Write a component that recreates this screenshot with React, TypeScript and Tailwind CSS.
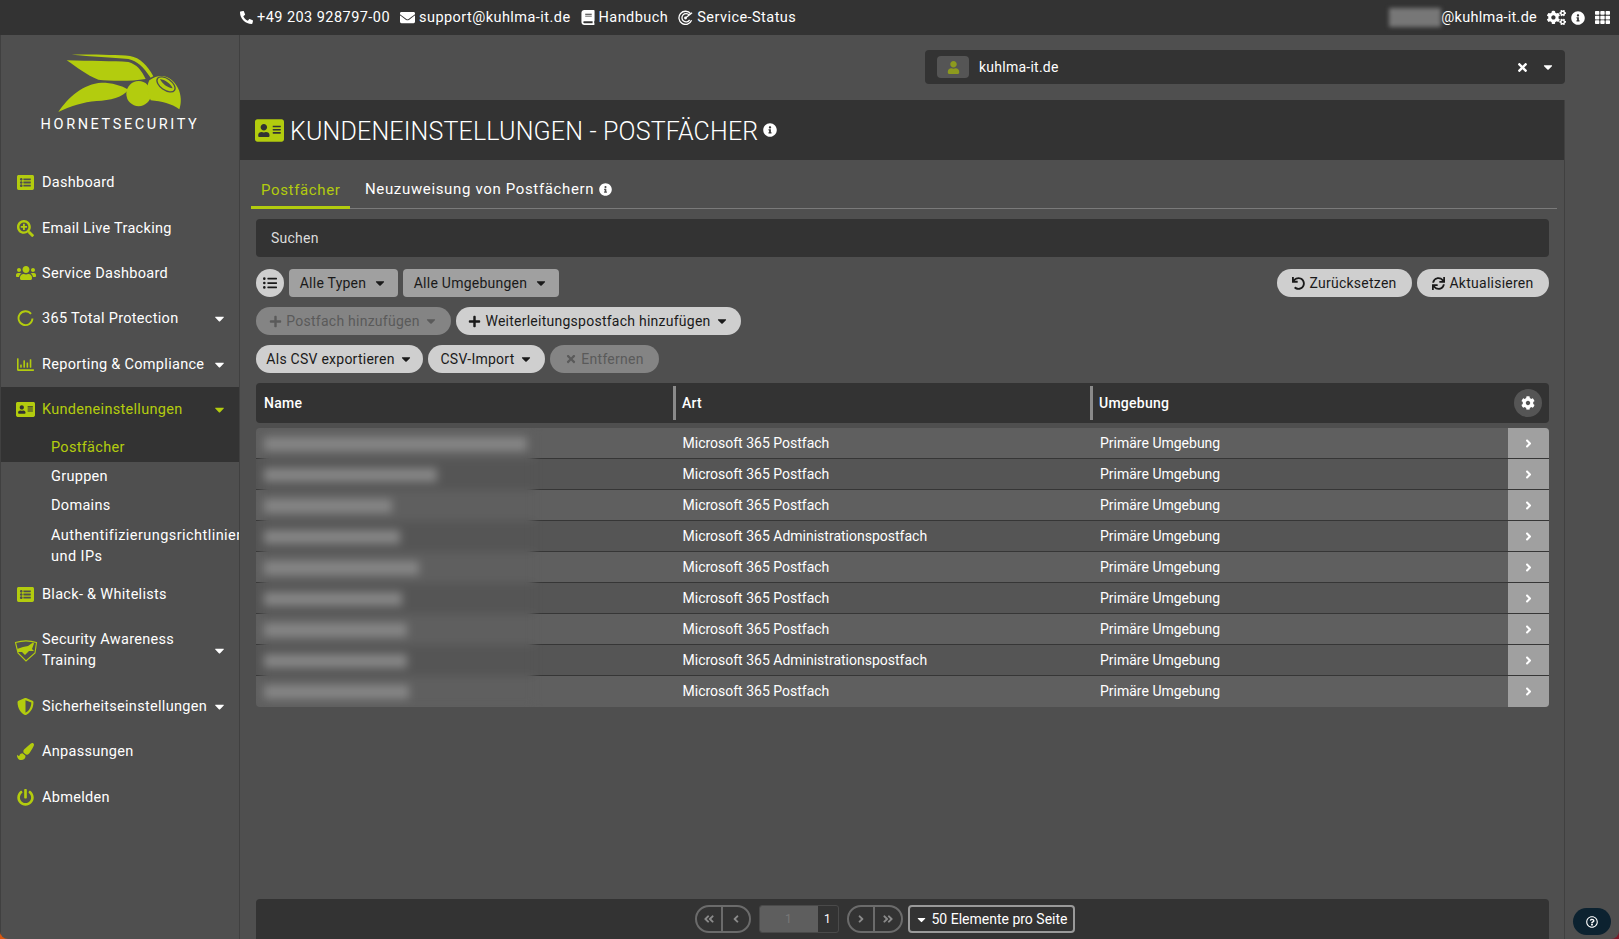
import React from "react";
import {
  FaPhone, FaEnvelope, FaBook, FaCogs, FaCog, FaInfoCircle, FaTh, FaTimes, FaCaretDown, FaListAlt, FaSearchPlus,
  FaUsers, FaRegChartBar, FaAddressCard, FaShieldAlt, FaPaintBrush, FaPowerOff, FaUndo, FaSync, FaPlus, FaListUl,
  FaAngleRight, FaAngleLeft, FaAngleDoubleLeft, FaAngleDoubleRight, FaUser, FaRegQuestionCircle,
} from "react-icons/fa";

const lime = "text-[#b3cc0e]";

function Logo() {
  return (
    <svg viewBox="0 0 540 210" className="w-[180px] h-[70px]">
      <g fill="#b3cc0e">
        <path d="M125 23C190 22 260 24 300 27C330 32 352 55 370 88L362 92C340 60 322 42 295 36C250 32 180 28 125 23Z" />
        <path d="M110 40C180 42 250 42 295 45C320 52 335 70 347 96C300 104 240 102 205 98C170 85 140 60 110 40Z" />
        <path d="M85 195C115 150 160 110 215 107C245 107 275 115 295 128C280 150 240 160 200 162C160 165 120 178 85 195Z" />
        <ellipse cx="326" cy="140" rx="37" ry="38" />
        <path d="M358 100C395 72 432 92 447 130C456 155 452 175 448 187C425 170 395 163 362 160C352 135 350 115 358 100Z" />
      </g>
      <ellipse cx="408" cy="112" rx="31" ry="17" transform="rotate(35 408 112)" fill="#b3cc0e" stroke="#4f4f4f" strokeWidth="4" />
      <path d="M390 96C405 98 422 110 428 124C412 122 396 110 390 96Z" fill="#4f4f4f" />
    </svg>
  );
}

function TotalIcon() {
  return (
    <svg viewBox="0 0 20 20" className="w-[17px] h-[17px]" fill="none" stroke="currentColor" strokeWidth="2.2">
      <path d="M16.5 4.6A8.2 8.2 0 1 0 18.2 10" />
    </svg>
  );
}

function AwarenessIcon() {
  return (
    <svg viewBox="0 0 24 24" className="w-[24px] h-[24px]" fill="none" stroke="currentColor">
      <path d="M1.5 4.5C8 2.5 16 2.5 22.5 4.5L21 15L12 23L4 15Z" strokeWidth="1.1" />
      <path d="M3 11L9 9L14 8L19 4.5L20 5.5L18 11L20 13L15 13L11 17L8 14L4 14Z" fill="currentColor" stroke="none" />
    </svg>
  );
}

function StatusIcon() {
  return (
    <svg viewBox="0 0 16 16" className="w-[15px] h-[15px]" fill="none" stroke="currentColor" strokeWidth="1.4">
      <path d="M13.5 4A7 7 0 1 0 14.5 11" />
      <path d="M12 5.5A4.4 4.4 0 1 0 12.4 10.5" />
      <path d="M15 3L8 8.5" />
      <circle cx="8" cy="8.5" r="1.5" fill="currentColor" stroke="none" />
    </svg>
  );
}

type Item = { label: React.ReactNode; icon: React.ReactNode; caret?: boolean; h?: string };

function NavItem({ label, icon, caret, h = "h-[45.4px]", active }: Item & { active?: boolean }) {
  return (
    <div className={`flex items-center ${h} ${active ? lime : "text-white"}`}>
      <span className={`w-[41px] flex justify-center items-center shrink-0 pl-[9px] pr-[1px] ${lime}`}>{icon}</span>
      <span className="flex-1 leading-[21px]">{label}</span>
      {caret && <FaCaretDown className={`mr-[12px] w-[15px] h-[15px] ${active ? lime : "text-white"}`} />}
    </div>
  );
}

function Sidebar() {
  const s = "w-[17px] h-[17px]";
  return (
    <aside className="w-[240px] shrink-0 border-r border-l border-[#404040] text-[14.5px] tracking-[0.3px] flex flex-col">
      <div className="h-[125px] flex flex-col items-center pt-[12px]">
        <Logo />
        <div className="text-[14.5px] tracking-[2.6px] text-white leading-none mt-[1px]">HORNETSECURITY</div>
      </div>
      <NavItem label="Dashboard" icon={<FaListAlt className={s} />} />
      <NavItem label="Email Live Tracking" icon={<FaSearchPlus className={s} />} />
      <NavItem label="Service Dashboard" icon={<FaUsers className="w-[20px] h-[20px]" />} />
      <NavItem label="365 Total Protection" icon={<TotalIcon />} caret />
      <NavItem label="Reporting & Compliance" icon={<FaRegChartBar className={s} />} caret />
      <div className="bg-[#333333]">
        <NavItem label="Kundeneinstellungen" icon={<FaAddressCard className="w-[19px] h-[19px]" />} caret active />
        <div className={`h-[30px] pt-[1px] flex items-center pl-[50px] ${lime}`}>Postfächer</div>
      </div>
      <div className="h-[29px] flex items-center pl-[50px] text-white">Gruppen</div>
      <div className="h-[29px] flex items-center pl-[50px] text-white">Domains</div>
      <div className="h-[51px] flex items-center pl-[50px] text-white leading-[21px] tracking-[0.45px] whitespace-pre overflow-hidden">
        {"Authentifizierungsrichtlinien\nund IPs"}
      </div>
      <NavItem label="Black- & Whitelists" icon={<FaListAlt className={s} />} />
      <NavItem label={<>Security Awareness<br />Training</>} icon={<AwarenessIcon />} caret h="h-[67px]" />
      <NavItem label="Sicherheitseinstellungen" icon={<FaShieldAlt className={s} />} caret />
      <NavItem label="Anpassungen" icon={<FaPaintBrush className={s} />} />
      <NavItem label="Abmelden" icon={<FaPowerOff className={s} />} />
    </aside>
  );
}

function TopBar() {
  const l = "flex items-center gap-[4px]";
  return (
    <header className="h-[35px] shrink-0 bg-[#333333] text-white text-[14.5px] flex items-center pl-[240px] pr-[9px]">
      <div className="flex items-center gap-[10px] tracking-[0.45px]">
        <span className={l}><FaPhone className="w-[13px] h-[13px] scale-x-[-1]" />+49 203 928797-00</span>
        <span className={l}><FaEnvelope className="w-[15px] h-[15px]" />support@kuhlma-it.de</span>
        <span className={l}><FaBook className="w-[14px] h-[15px]" />Handbuch</span>
        <span className={l}><StatusIcon />Service-Status</span>
      </div>
      <div className="ml-auto flex items-center">
        <span className="w-[52px] h-[19px] bg-[#777777] blur-[2px]" />
        <span>@kuhlma-it.de</span>
        <FaCogs className="ml-[10px] w-[19px] h-[17px]" />
        <FaInfoCircle className="ml-[5px] w-[14px] h-[14px]" />
        <FaTh className="ml-[10px] w-[15px] h-[15px]" />
      </div>
    </header>
  );
}

function Btn({ children, w, kind = "light" }: { children: React.ReactNode; w: string; kind?: "light" | "off" | "filter" }) {
  const c = {
    light: "bg-[#cfcfcf] text-[#1a1a1a] rounded-full",
    off: "bg-[#848484] text-[#5a5a5a] rounded-full",
    filter: "bg-[#a0a0a0] text-[#1a1a1a] rounded-[4px]",
  }[kind];
  return <div className={`${w} h-[28px] shrink-0 flex items-center justify-center gap-[4px] whitespace-nowrap ${c}`}>{children}</div>;
}

const rows = [
  ["Microsoft 365 Postfach", 263],
  ["Microsoft 365 Postfach", 173],
  ["Microsoft 365 Postfach", 128],
  ["Microsoft 365 Administrationspostfach", 136],
  ["Microsoft 365 Postfach", 155],
  ["Microsoft 365 Postfach", 138],
  ["Microsoft 365 Postfach", 143],
  ["Microsoft 365 Administrationspostfach", 143],
  ["Microsoft 365 Postfach", 145],
] as const;

function Table() {
  return (
    <div className="mt-[10px] text-[14px] text-white">
      <div className="h-[40px] bg-[#333333] rounded-[4px] flex items-center font-medium">
        <div className="w-[420px] pl-[8px] h-[34px] flex items-center border-r-[3px] border-[#8a8a8a]">Name</div>
        <div className="w-[417px] pl-[6px] h-[34px] flex items-center border-r-[3px] border-[#8a8a8a]">Art</div>
        <div className="flex-1 pl-[6px]">Umgebung</div>
        <div className="w-[28px] h-[28px] mr-[7px] rounded-full bg-[#555555] flex items-center justify-center">
          <FaCog className="w-[14px] h-[14px]" />
        </div>
      </div>
      <div className="relative mt-[5px] rounded-[4px] overflow-hidden tracking-normal">
        {rows.map(([art], i) => (
          <div
            key={i}
            className={`h-[31px] flex items-center ${i % 2 === 0 ? "bg-[#5f5f5f]" : "bg-[#555555]"} ${i < rows.length - 1 ? "border-b border-[#363636]" : ""}`}
          >
            <div className="w-[426.5px] shrink-0" />
            <div className="w-[417.5px] shrink-0">{art}</div>
            <div className="flex-1">Primäre Umgebung</div>
            <div className="w-[41px] h-full bg-[#a0a0a0] flex items-center justify-center">
              <FaAngleRight className="w-[13px] h-[13px]" />
            </div>
          </div>
        ))}
        <div className="absolute left-[6px] top-0 w-[272px] blur-[4px]">
          {rows.map(([, w], i) => (
            <div key={i} className={`h-[31px] flex items-center px-[2px] ${i % 2 === 0 ? "bg-[#5f5f5f]" : "bg-[#555555]"}`}>
              <div className="h-[14px] bg-[#858585]" style={{ width: w }} />
            </div>
          ))}
        </div>
      </div>
    </div>
  );
}

function Pager() {
  const pill = "h-[28px] border-2 border-[#6b6b6b] rounded-full flex items-center text-[#8a8a8a]";
  const cell = "w-[27px] h-full flex items-center justify-center";
  return (
    <div className="mt-auto h-[40px] bg-[#333333] rounded-t-[4px] flex items-center justify-center text-white text-[14px] pr-[36px]">
      <div className={`${pill} w-[56px]`}>
        <div className={`${cell} border-r-2 border-[#6b6b6b]`}><FaAngleDoubleLeft className="w-[12px] h-[12px]" /></div>
        <div className={cell}><FaAngleLeft className="w-[12px] h-[12px]" /></div>
      </div>
      <div className="ml-[8px] w-[80px] h-[28px] flex border border-[#4a4a4a] rounded-[3px] overflow-hidden text-[12px]">
        <div className="w-[58px] bg-[#5e5e5e] text-[#777777] flex items-center justify-center">1</div>
        <div className="flex-1 flex items-center justify-center">1</div>
      </div>
      <div className={`${pill} w-[56px] ml-[8px]`}>
        <div className={`${cell} border-r-2 border-[#6b6b6b]`}><FaAngleRight className="w-[12px] h-[12px]" /></div>
        <div className={cell}><FaAngleDoubleRight className="w-[12px] h-[12px]" /></div>
      </div>
      <div className="ml-[5px] w-[167px] h-[28px] border-2 border-[#9a9a9a] rounded-[4px] flex items-center justify-center gap-[4px] tracking-normal">
        <FaCaretDown className="w-[13px] h-[13px]" />50 Elemente pro Seite
      </div>
    </div>
  );
}

function Main() {
  const car = "w-[14px] h-[14px]";
  return (
    <main className="w-[1325px] shrink-0 flex flex-col min-h-0">
      <div className="self-end mt-[15px] w-[640px] h-[34px] bg-[#333333] rounded-[4px] flex items-center pl-[12px] pr-[10px] text-white text-[14px]">
        <div className="w-[32px] h-[22px] bg-[#555555] rounded-[4px] flex items-center justify-center">
          <FaUser className="w-[13px] h-[13px] text-[#8d9a1e]" />
        </div>
        <span className="ml-[10px]">kuhlma-it.de</span>
        <FaTimes className="ml-auto w-[13px] h-[13px]" />
        <FaCaretDown className="ml-[12px] w-[14px] h-[14px]" />
      </div>
      <section className="mt-[16px] flex-1 flex flex-col min-h-0 border-r border-[#404040]">
        <div className="h-[60px] shrink-0 bg-[#333333] flex items-center pl-[15px] text-white">
          <FaAddressCard className={`w-[29px] h-[29px] ${lime}`} />
          <h1 className="ml-[6px] mt-[3px] text-[25px] font-light tracking-[0.17px] leading-none">KUNDENEINSTELLUNGEN - POSTFÄCHER</h1>
          <FaInfoCircle className="ml-[5px] w-[14px] h-[14px] -mt-[1px]" />
        </div>
        <div className="flex-1 flex flex-col min-h-0 pl-[16px] pr-[15px]">
          <div className="-ml-[5px] -mr-[8px] h-[49px] shrink-0 flex items-end border-b border-[#7a7a7a] text-[15px] tracking-[0.65px]">
            <div className={`w-[99px] h-[49px] pt-[20px] pl-[10px] border-b-[3px] border-[#b3cc0e] -mb-px leading-[21px] ${lime}`}>Postfächer</div>
            <div className="h-[49px] pt-[20px] ml-[15px] text-white leading-[21px] flex items-start gap-[5px]">
              Neuzuweisung von Postfächern
              <FaInfoCircle className="w-[13px] h-[13px] mt-[4px]" />
            </div>
          </div>
          <div className="mt-[10px] h-[38px] shrink-0 bg-[#333333] rounded-[4px] flex items-center pl-[15px] text-[#dcdcdc] text-[14px]">Suchen</div>
          <div className="mt-[12px] flex items-center gap-[5px] text-[14px] shrink-0">
            <div className="w-[28px] h-[28px] rounded-full bg-[#cfcfcf] flex items-center justify-center">
              <FaListUl className="w-[14px] h-[14px] text-[#1a1a1a]" />
            </div>
            <Btn w="w-[109px]" kind="filter">Alle Typen<FaCaretDown className={`${car} ml-[3px]`} /></Btn>
            <Btn w="w-[156px]" kind="filter">Alle Umgebungen<FaCaretDown className={`${car} ml-[3px]`} /></Btn>
            <div className="ml-auto" />
            <Btn w="w-[135px]"><FaUndo className="w-[13px] h-[13px]" />Zurücksetzen</Btn>
            <Btn w="w-[132px]"><FaSync className="w-[13px] h-[13px]" />Aktualisieren</Btn>
          </div>
          <div className="mt-[10px] flex gap-[5px] text-[14px] shrink-0">
            <Btn w="w-[195px]" kind="off"><FaPlus className="w-[13px] h-[13px]" />Postfach hinzufügen<FaCaretDown className={car} /></Btn>
            <Btn w="w-[285px]"><FaPlus className="w-[13px] h-[13px]" />Weiterleitungspostfach hinzufügen<FaCaretDown className={car} /></Btn>
          </div>
          <div className="mt-[10px] flex gap-[5px] text-[14px] shrink-0">
            <Btn w="w-[167px]">Als CSV exportieren<FaCaretDown className={car} /></Btn>
            <Btn w="w-[117px]">CSV-Import<FaCaretDown className={car} /></Btn>
            <Btn w="w-[109px]" kind="off"><FaTimes className="w-[12px] h-[12px]" />Entfernen</Btn>
          </div>
          <Table />
          <Pager />
        </div>
      </section>
    </main>
  );
}

export default function App() {
  return (
    <div className="relative w-[1619px] h-[939px] overflow-hidden bg-gradient-to-r from-[#d9560f] from-50% to-[#7c1a2a] to-50%">
      <div className="w-full h-full rounded-b-[8px] overflow-hidden bg-[#4f4f4f] flex flex-col font-['Roboto',sans-serif] tracking-[0.25px]">
        <TopBar />
        <div className="flex-1 flex min-h-0">
          <Sidebar />
          <Main />
        </div>
      </div>
      <div className="absolute right-[8px] bottom-[4px] w-[38px] h-[27px] rounded-full bg-[#0c2230] flex items-center justify-center text-white">
        <FaRegQuestionCircle className="w-[12px] h-[12px]" />
      </div>
    </div>
  );
}
